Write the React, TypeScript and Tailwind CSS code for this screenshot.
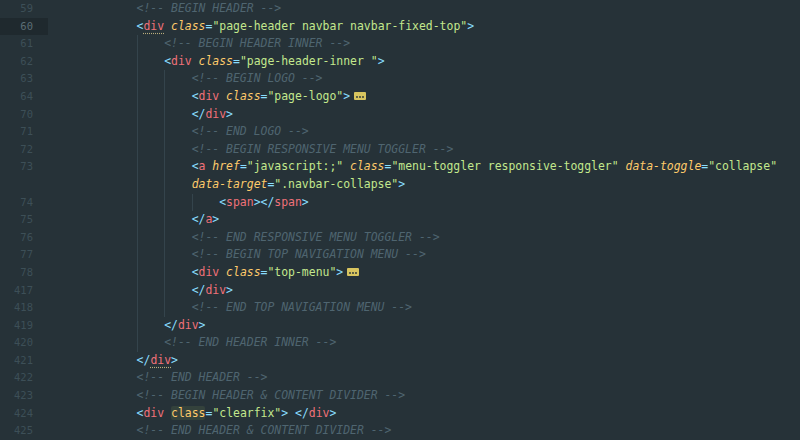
import React from 'react';

type Tok = [string, string];
type Line = { n: string; lvl: number; toks: Tok[]; fold?: boolean; active?: boolean };

const P = 'text-[#89ddff]';
const TAG = 'text-[#f07178]';
const ATTR = 'text-[#ffcb6b] italic';
const STR = 'text-[#c3e88d]';
const COM = 'text-[#4f6570] italic';
const MATCH = 'text-[#f07178] underline decoration-dotted decoration-[#b9ad7c] underline-offset-[3px]';

const open = (tag: string, attrs: [string, string][], tagCls = TAG): Tok[] => {
  const out: Tok[] = [[P, '<'], [tagCls, tag]];
  attrs.forEach(([k, v]) => {
    out.push(['', ' '], [ATTR, k], [P, '='], [STR, `"${v}"`]);
  });
  out.push([P, '>']);
  return out;
};
const close = (tag: string, tagCls = TAG): Tok[] => [[P, '</'], [tagCls, tag], [P, '>']];
const com = (t: string): Tok[] => [[COM, `<!-- ${t} -->`]];

const lines: Line[] = [
  { n: '59', lvl: 0, toks: com('BEGIN HEADER') },
  { n: '60', lvl: 0, toks: open('div', [['class', 'page-header navbar navbar-fixed-top']], MATCH), active: true },
  { n: '61', lvl: 1, toks: com('BEGIN HEADER INNER') },
  { n: '62', lvl: 1, toks: open('div', [['class', 'page-header-inner ']]) },
  { n: '63', lvl: 2, toks: com('BEGIN LOGO') },
  { n: '64', lvl: 2, toks: open('div', [['class', 'page-logo']]), fold: true },
  { n: '70', lvl: 2, toks: close('div') },
  { n: '71', lvl: 2, toks: com('END LOGO') },
  { n: '72', lvl: 2, toks: com('BEGIN RESPONSIVE MENU TOGGLER') },
  {
    n: '73',
    lvl: 2,
    toks: [
      [P, '<'], [TAG, 'a'],
      ['', ' '], [ATTR, 'href'], [P, '='], [STR, '"javascript:;"'],
      ['', ' '], [ATTR, 'class'], [P, '='], [STR, '"menu-toggler responsive-toggler"'],
      ['', ' '], [ATTR, 'data-toggle'], [P, '='], [STR, '"collapse"'],
    ],
  },
  { n: '', lvl: 2, toks: [[ATTR, 'data-target'], [P, '='], [STR, '".navbar-collapse"'], [P, '>']] },
  { n: '74', lvl: 3, toks: [...open('span', []), ...close('span')] },
  { n: '75', lvl: 2, toks: close('a') },
  { n: '76', lvl: 2, toks: com('END RESPONSIVE MENU TOGGLER') },
  { n: '77', lvl: 2, toks: com('BEGIN TOP NAVIGATION MENU') },
  { n: '78', lvl: 2, toks: open('div', [['class', 'top-menu']]), fold: true },
  { n: '417', lvl: 2, toks: close('div') },
  { n: '418', lvl: 2, toks: com('END TOP NAVIGATION MENU') },
  { n: '419', lvl: 1, toks: close('div') },
  { n: '420', lvl: 1, toks: com('END HEADER INNER') },
  { n: '421', lvl: 0, toks: close('div', MATCH) },
  { n: '422', lvl: 0, toks: com('END HEADER') },
  { n: '423', lvl: 0, toks: com('BEGIN HEADER & CONTENT DIVIDER') },
  {
    n: '424',
    lvl: 0,
    toks: [
      [P, '<'], [TAG, 'div'], ['', ' '],
      ['text-[#ffcb6b] bg-[#34423c] rounded-[2px]', 'class'], [P, '='], [STR, '"clearfix"'], [P, '>'],
      ['', ' '], ...close('div'),
    ],
  },
  { n: '425', lvl: 0, toks: com('END HEADER & CONTENT DIVIDER') },
];

const FoldMark = () => (
  <svg width="12" height="8" viewBox="0 0 12 8" className="inline-block ml-[4px] align-middle">
    <rect x="0" y="0" width="12" height="8" rx="1" fill="#d8c55f" />
    <circle cx="3" cy="5" r="0.9" fill="#263238" />
    <circle cx="6" cy="5" r="0.9" fill="#263238" />
    <circle cx="9" cy="5" r="0.9" fill="#263238" />
  </svg>
);

const Row = ({ line }: { line: Line }) => {
  const units = 3 + line.lvl;
  return (
    <div className="flex h-[17.6px] leading-[17.6px]">
      <div
        className={`w-[48px] shrink-0 text-right pr-[15px] text-[10.5px] ${
          line.active ? 'bg-[#1f292e] text-[#5b6d75]' : 'text-[#3d4f57]'
        }`}
      >
        {line.n}
      </div>
      <div className="flex pl-[6px] whitespace-pre">
        {Array.from({ length: units }).map((_, i) => (
          <span
            key={i}
            className={`inline-block w-[4ch] h-full ${i >= 3 ? 'border-l border-[#34444c]' : ''}`}
          />
        ))}
        <span>
          {line.toks.map(([c, t], i) => (
            <span key={i} className={c}>
              {t}
            </span>
          ))}
          {line.fold && <FoldMark />}
        </span>
      </div>
    </div>
  );
};

export default function App() {
  return (
    <div
      className="w-[800px] h-[440px] overflow-hidden bg-[#263238] text-[11.45px] text-[#eeffff]"
      style={{ fontFamily: '"DejaVu Sans Mono", "Liberation Mono", monospace' }}
    >
      {lines.map((l, i) => (
        <Row key={i} line={l} />
      ))}
    </div>
  );
}
